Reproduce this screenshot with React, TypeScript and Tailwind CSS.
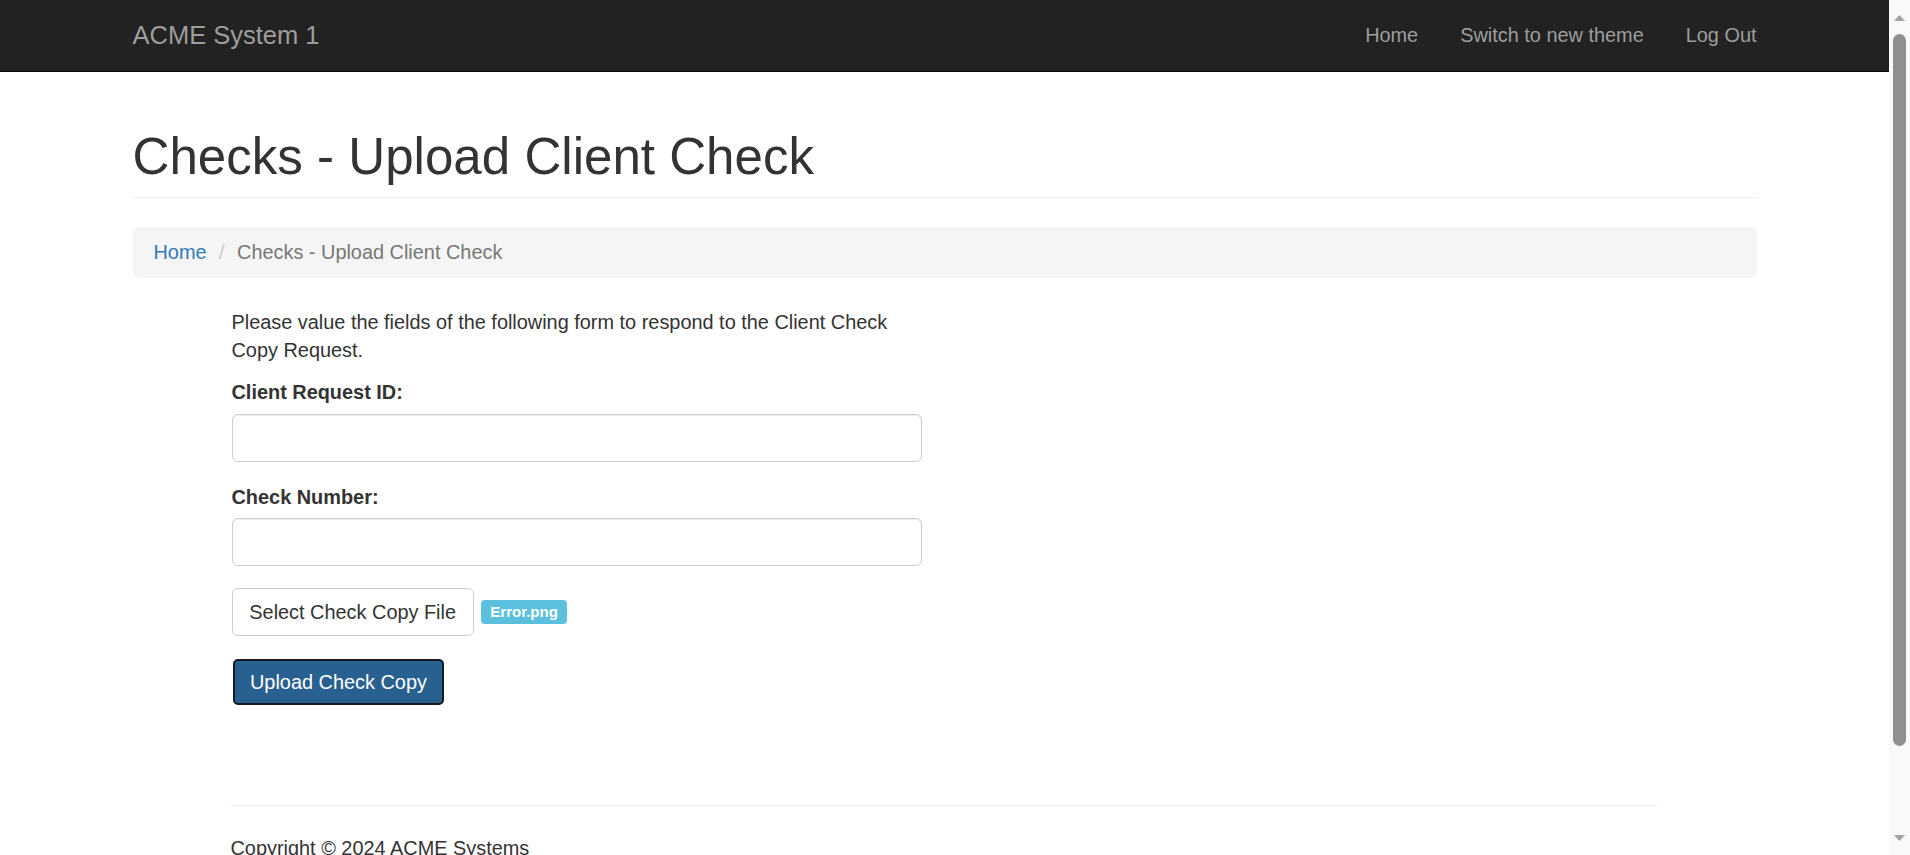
import React from "react";

export default function App() {
  return (
    <div className="flex h-[855px] w-[1910px] overflow-hidden bg-white font-['Liberation_Sans',Arial,Helvetica,sans-serif] text-[#333]">
      <div className="min-w-0 flex-1">
        <nav className="h-[72px] border-b border-[#080808] bg-[#222]">
          <div className="mx-auto flex h-full w-[1624px] items-center justify-between">
            <span className="text-[25.5px] text-[#9d9d9d]">ACME System 1</span>
            <div className="flex gap-[42px] text-[19.9px] text-[#9d9d9d]">
              <span>Home</span>
              <span>Switch to new theme</span>
              <span>Log Out</span>
            </div>
          </div>
        </nav>

        <div className="mx-auto w-[1624px]">
          <div className="mt-[57px] border-b border-[#eee] pb-[12px]">
            <h1 className="text-[51.1px] font-normal leading-[1.1]">Checks - Upload Client Check</h1>
          </div>

          <div className="mt-[29px] flex h-[51px] items-center rounded-[6px] bg-[#f5f5f5] px-[21px] pb-[1px] text-[19.9px] leading-[28px]">
            <span className="text-[#337ab7]">Home</span>
            <span className="ml-[5.4px] px-[7px] text-[#ccc]">/{"\u00a0"}</span>
            <span className="text-[#777]">Checks - Upload Client Check</span>
          </div>

          <div className="ml-[99px] mt-[30px] w-[690px] text-[19.9px] leading-[28px]">
            <p className="mb-[14px]">
              Please value the fields of the following form to respond to the Client Check Copy Request.
            </p>

            <label className="mb-[7.5px] block font-bold">Client Request ID:</label>
            <div className="h-[48px] w-full rounded-[6px] border border-[#ccc] bg-white shadow-[inset_0_1px_1px_rgba(0,0,0,0.075)]" />

            <label className="mb-[7.5px] mt-[21px] block font-bold">Check Number:</label>
            <div className="h-[48px] w-full rounded-[6px] border border-[#ccc] bg-white shadow-[inset_0_1px_1px_rgba(0,0,0,0.075)]" />

            <div className="mt-[22px] flex items-center">
              <div className="flex h-[48px] items-center rounded-[6px] border border-[#ccc] bg-white px-[16.8px] text-[#333]">
                Select Check Copy File
              </div>
              <span className="ml-[7px] rounded-[4px] bg-[#5bc0de] px-[9.5px] pb-[5px] pt-[4px] text-[15px] font-bold leading-none text-white">
                Error.png
              </span>
            </div>

            <div className="mt-[23px] flex">
              <div className="ml-[1px] flex h-[46px] items-center rounded-[5px] border-2 border-[#151a20] bg-[#286090] px-[15.5px] text-white">
                Upload Check Copy
              </div>
            </div>
          </div>

          <div className="ml-[98px] mt-[100px] w-[1426px] border-t border-[#eee] pt-[28px] text-[19.9px] leading-[28px]">
            Copyright © 2024 ACME Systems
          </div>
        </div>
      </div>

      <div className="flex h-full w-[21px] flex-col items-center bg-[#f9f9f9] pb-[14px] pt-[15px]">
        <svg width="11" height="6" viewBox="0 0 11 6">
          <polygon points="0,6 5.5,0 11,6" fill="#a3a3a3" />
        </svg>
        <div className="mt-[13px] h-[712px] w-[13px] rounded-full bg-[#8f8f8f]" />
        <div className="mt-auto">
          <svg width="11" height="6" viewBox="0 0 11 6">
            <polygon points="0,0 11,0 5.5,6" fill="#a3a3a3" />
          </svg>
        </div>
      </div>
    </div>
  );
}
